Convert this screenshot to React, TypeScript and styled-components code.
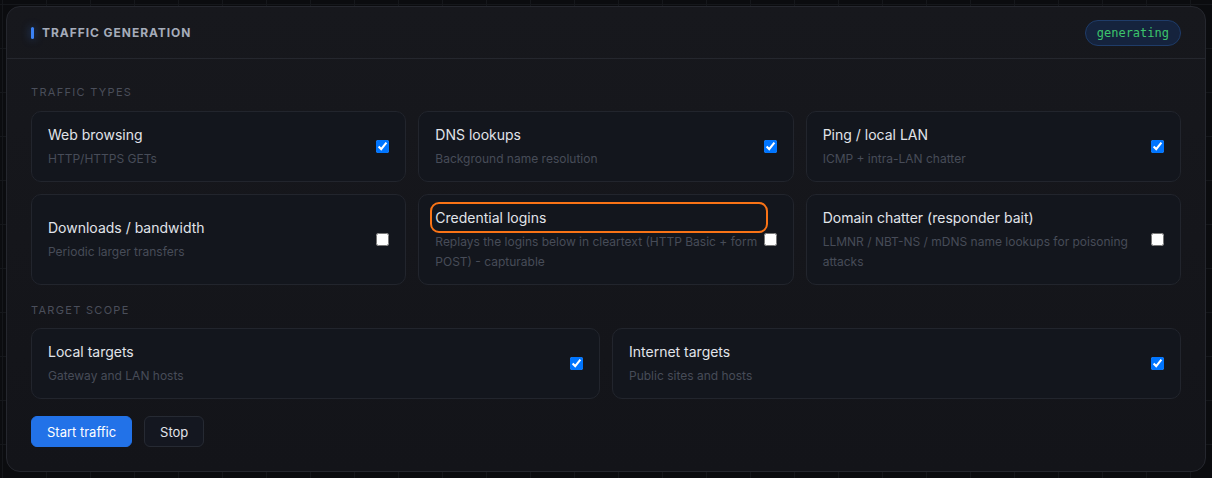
import React, { useState } from "react";
import styled, { createGlobalStyle } from "styled-components";

const Global = createGlobalStyle`
  html, body {
    margin: 0;
    padding: 0;
    background-color: #0b0c0f;
    background-image:
      linear-gradient(to right, #15171b 1px, transparent 1px),
      linear-gradient(to bottom, #15171b 1px, transparent 1px);
    background-size: 44px 44px;
    background-position: 2px 4px;
    font-family: Inter, "Noto Sans", sans-serif;
  }
  * { box-sizing: border-box; }
`;

const Page = styled.div`
  padding: 6px;
`;

const Panel = styled.section`
  border: 1px solid #25272e;
  border-radius: 14px;
  background: linear-gradient(180deg, #17181d 0%, #131419 100%);
  overflow: hidden;
`;

const Header = styled.header`
  height: 52px;
  display: flex;
  align-items: center;
  justify-content: space-between;
  padding: 0 24px;
  border-bottom: 1px solid #25272e;
`;

const TitleWrap = styled.div`
  display: flex;
  align-items: center;
  gap: 8px;
`;

const Accent = styled.span`
  width: 3px;
  height: 12px;
  border-radius: 2px;
  background: #3b82f6;
  box-shadow: 0 0 8px rgba(59, 130, 246, 0.55);
`;

const PanelTitle = styled.h2`
  margin: 0;
  font-size: 12px;
  font-weight: 700;
  letter-spacing: 0.95px;
  color: #a5acba;
  text-transform: uppercase;
`;

const Badge = styled.span`
  height: 26px;
  display: inline-flex;
  align-items: center;
  padding: 0 11px;
  border-radius: 13px;
  background: #15233d;
  border: 1px solid #1f3c69;
  color: #3cc46c;
  font-family: "DejaVu Sans Mono", "Liberation Mono", monospace;
  font-size: 12px;
`;

const Body = styled.div`
  padding: 25px 24px 24px;
  display: flex;
  flex-direction: column;
`;

const SectionLabel = styled.div<{ $first?: boolean }>`
  font-size: 11px;
  line-height: 16px;
  letter-spacing: 1.3px;
  color: #4a4e5a;
  text-transform: uppercase;
  margin-top: ${(p) => (p.$first ? "0" : "17px")};
  margin-bottom: ${(p) => (p.$first ? "11px" : "10px")};
`;

const Grid = styled.div<{ $cols: number }>`
  display: grid;
  grid-template-columns: repeat(${(p) => p.$cols}, 1fr);
  gap: 12px 12px;
`;

const Card = styled.label`
  display: flex;
  align-items: center;
  padding: 12px 16px 12px 16px;
  border: 1px solid #22252d;
  border-radius: 10px;
  background: #13161d;
  cursor: pointer;
`;

const CardText = styled.div`
  flex: 1;
  min-width: 0;
  display: flex;
  flex-direction: column;
  gap: 4px;
`;

const CardTitle = styled.div<{ $focused?: boolean }>`
  font-size: 14px;
  line-height: 21px;
  color: #e1e4ea;
  border-radius: 4px;
  outline: ${(p) => (p.$focused ? "2px solid #f97316" : "none")};
  outline-offset: 3px;
`;

const CardDesc = styled.div`
  font-size: 12px;
  line-height: 20px;
  color: #474c58;
`;

const Check = styled.input`
  width: 13px;
  height: 13px;
  margin: 0 0 0 1px;
  flex-shrink: 0;
`;

const Actions = styled.div`
  display: flex;
  gap: 12px;
  margin-top: 17px;
`;

const Button = styled.button<{ $primary?: boolean }>`
  height: 31px;
  padding: 0 15px;
  border-radius: 6px;
  font-family: Inter, "Noto Sans", sans-serif;
  font-size: 13px;
  cursor: pointer;
  color: ${(p) => (p.$primary ? "#ffffff" : "#e1e4ea")};
  background: ${(p) => (p.$primary ? "#2272e8" : "#141720")};
  border: 1px solid ${(p) => (p.$primary ? "#2272e8" : "#262a33")};
`;

type Opt = { title: string; desc: string; on: boolean; focused?: boolean };

const trafficTypes: Opt[] = [
  { title: "Web browsing", desc: "HTTP/HTTPS GETs", on: true },
  { title: "DNS lookups", desc: "Background name resolution", on: true },
  { title: "Ping / local LAN", desc: "ICMP + intra-LAN chatter", on: true },
  { title: "Downloads / bandwidth", desc: "Periodic larger transfers", on: false },
  {
    title: "Credential logins",
    desc: "Replays the logins below in cleartext (HTTP Basic + form POST) - capturable",
    on: false,
    focused: true,
  },
  {
    title: "Domain chatter (responder bait)",
    desc: "LLMNR / NBT-NS / mDNS name lookups for poisoning attacks",
    on: false,
  },
];

const scopes: Opt[] = [
  { title: "Local targets", desc: "Gateway and LAN hosts", on: true },
  { title: "Internet targets", desc: "Public sites and hosts", on: true },
];

function OptionCard({ opt }: { opt: Opt }) {
  const [on, setOn] = useState(opt.on);
  return (
    <Card>
      <CardText>
        <CardTitle $focused={opt.focused}>{opt.title}</CardTitle>
        <CardDesc>{opt.desc}</CardDesc>
      </CardText>
      <Check type="checkbox" checked={on} onChange={() => setOn(!on)} />
    </Card>
  );
}

export default function App() {
  return (
    <>
      <Global />
      <Page>
        <Panel>
          <Header>
            <TitleWrap>
              <Accent />
              <PanelTitle>Traffic Generation</PanelTitle>
            </TitleWrap>
            <Badge>generating</Badge>
          </Header>
          <Body>
            <SectionLabel $first>Traffic types</SectionLabel>
            <Grid $cols={3}>
              {trafficTypes.map((o) => (
                <OptionCard key={o.title} opt={o} />
              ))}
            </Grid>
            <SectionLabel>Target scope</SectionLabel>
            <Grid $cols={2}>
              {scopes.map((o) => (
                <OptionCard key={o.title} opt={o} />
              ))}
            </Grid>
            <Actions>
              <Button $primary>Start traffic</Button>
              <Button>Stop</Button>
            </Actions>
          </Body>
        </Panel>
      </Page>
    </>
  );
}
